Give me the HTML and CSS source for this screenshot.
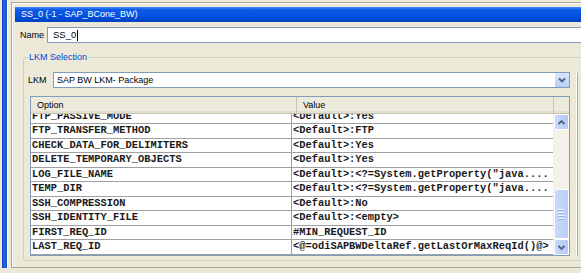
FILE: index.html
```html
<html>
<head>
	<link rel="stylesheet" href="styles.css">
</head>
<body>
	<div class="desk">
		<div class="edge"></div>
		<div class="pane">
			<div class="titlebar">SS_0 (-1 - SAP_BCone_BW)</div>
			<div class="namerow">
				<span class="lbl">Name</span>
				<div class="field">SS_0<span class="caret"></span></div>
			</div>
			<fieldset class="group">
				<legend>LKM Selection</legend>
				<div class="gwrap">
					<div class="gcol">
						<div class="lkmrow">
							<span class="lkmlbl">LKM</span>
							<div class="combo">
								<span class="ctext">SAP BW LKM- Package</span>
								<span class="drop">
									<svg width="14" height="14" viewBox="0 0 14 14"><polyline points="4,5.5 7,8.5 10,5.5" fill="none" stroke="#4d6185" stroke-width="1.8"/></svg>
								</span>
							</div>
						</div>
						<div class="grid">
							<div class="ghead">
								<div class="hopt">Option</div>
								<div class="hval">Value</div>
								<div class="hfill"></div>
							</div>
							<div class="gbody">
								<div class="rowsclip">
									<div class="rows">
										<div class="row"><div class="opt">FTP_PASSIVE_MODE</div><div class="val">&lt;Default&gt;:Yes</div></div>
										<div class="row"><div class="opt">FTP_TRANSFER_METHOD</div><div class="val">&lt;Default&gt;:FTP</div></div>
										<div class="row"><div class="opt">CHECK_DATA_FOR_DELIMITERS</div><div class="val">&lt;Default&gt;:Yes</div></div>
										<div class="row"><div class="opt">DELETE_TEMPORARY_OBJECTS</div><div class="val">&lt;Default&gt;:Yes</div></div>
										<div class="row"><div class="opt">LOG_FILE_NAME</div><div class="val">&lt;Default&gt;:&lt;?=System.getProperty("java....</div></div>
										<div class="row"><div class="opt">TEMP_DIR</div><div class="val">&lt;Default&gt;:&lt;?=System.getProperty("java....</div></div>
										<div class="row"><div class="opt">SSH_COMPRESSION</div><div class="val">&lt;Default&gt;:No</div></div>
										<div class="row"><div class="opt">SSH_IDENTITY_FILE</div><div class="val">&lt;Default&gt;:&lt;empty&gt;</div></div>
										<div class="row"><div class="opt">FIRST_REQ_ID</div><div class="val">#MIN_REQUEST_ID</div></div>
										<div class="row"><div class="opt">LAST_REQ_ID</div><div class="val">&lt;@=odiSAPBWDeltaRef.getLastOrMaxReqId()@&gt;</div></div>
									</div>
								</div>
								<div class="sbar">
									<div class="sbtn">
										<svg width="13" height="13" viewBox="0 0 13 13"><polyline points="3.5,8 6.5,5 9.5,8" fill="none" stroke="#4d6185" stroke-width="1.8"/></svg>
									</div>
									<div class="track"></div>
									<div class="thumb">
										<div class="grip"></div>
										<div class="grip"></div>
										<div class="grip"></div>
										<div class="grip"></div>
									</div>
									<div class="sbtn">
										<svg width="13" height="13" viewBox="0 0 13 13"><polyline points="3.5,5 6.5,8 9.5,5" fill="none" stroke="#4d6185" stroke-width="1.8"/></svg>
									</div>
								</div>
							</div>
						</div>
					</div>
					<div class="rail"></div>
				</div>
			</fieldset>
		</div>
	</div>
</body>
</html>
```

FILE: styles.css
```css
body{margin:0; background-color:#ECE9D8; width:581px; height:273px; overflow:hidden; font-family:"Liberation Sans", Arial, sans-serif; font-size:9px; color:#000;}
.desk{display:flex; height:268px;}
.edge{width:5px; margin-left:2px; background:linear-gradient(90deg,#0f3fc4,#2a62e0 50%,#1a4fd0); border-right:1px solid #fff;}
.pane{flex:1; margin-left:3px; margin-top:2px; border-top:1px solid #ACA899; border-left:1px solid #ACA899; border-bottom:1px solid #ACA899; box-shadow:inset 1px 1px 0 #fff; padding:4px 0 0 3px; display:flex; flex-direction:column; min-width:0;}
.titlebar{height:15px; line-height:15px; padding-left:6px; color:#fff; background:linear-gradient(#4a8ff5 0,#0c5ae6 18%,#0452e2 60%,#0140c2 100%);}
.namerow{display:flex; align-items:center; margin-top:5px;}
.lbl{width:32px; padding-left:5px; box-sizing:border-box;}
.field{flex:1; height:16px; box-sizing:border-box; border:1px solid #7F9DB9; background:#fff; margin-right:-4px; padding-left:5px; line-height:14px; font-size:9.5px; display:flex; align-items:center;}
.caret{display:inline-block; width:1px; height:11px; background:#000; margin-left:1px;}
.group{margin:9px -6px 0 8px; border:1px solid #D0D0BF; border-radius:3px; padding:9px 0 4px 4px; min-width:0;}
.group legend{color:#0046D5; padding:0 1px; line-height:11px; margin-left:0;}
.gwrap{display:flex;}
.gcol{width:542px;}
.rail{margin-left:7px; margin-top:1px; border-left:1px solid #ACA899; box-shadow:-1px 0 0 #fff;}
.lkmrow{display:flex; align-items:center;}
.lkmlbl{width:25px;}
.combo{flex:1; height:16px; box-sizing:border-box; border:1px solid #7F9DB9; background:#fff; display:flex; align-items:center; justify-content:space-between;}
.ctext{padding-left:3px;}
.drop{width:14px; height:14px; background:linear-gradient(#dbe6fd,#b9cdf8); border-left:1px solid #fff; display:flex;}
.grid{margin:8px 0 0 2px; border:1px solid #7F9DB9; background:#fff;}
.ghead{display:flex; height:16px; background:#EBEADB; border-bottom:1px solid #C5C2B2; box-shadow:inset 0 -2px 0 #E2DFCF;}
.hopt{width:259px; padding-left:6px; line-height:16px; border-right:1px solid #C7C5B2;}
.hval{flex:1; padding-left:6px; line-height:16px; border-right:1px solid #C7C5B2;}
.hfill{width:15px;}
.gbody{display:flex; height:141px;}
.rowsclip{flex:1; overflow:hidden;}
.rows{margin-top:-4.5px;}
.row{display:flex; height:14.5px; box-sizing:border-box; border-bottom:1px solid #A0A0A0; font-family:"Liberation Mono", "Courier New", monospace; font-size:10.4px; font-weight:bold; line-height:13.5px; color:#1a1a1a;}
.opt{width:261px; padding-left:1px; border-right:1px solid #A0A0A0; box-sizing:border-box; white-space:nowrap; overflow:hidden;}
.val{flex:1; padding-left:1px; white-space:nowrap; overflow:hidden;}
.sbar{width:15px; display:flex; flex-direction:column; background:#F3F1EA; border-left:1px solid #EEEDE5;}
.sbtn{height:14px; display:flex; align-items:center; justify-content:center; background:linear-gradient(90deg,#c8d8fb,#b4c9f6); border:1px solid #fff; border-radius:2px;}
.track{flex:1;}
.thumb{height:48px; background:linear-gradient(90deg,#cbdafc,#b8cdf9); border:1px solid #fff; border-radius:2px; display:flex; flex-direction:column; align-items:center; justify-content:center; gap:1px;}
.grip{width:7px; height:1px; background:#eef3fe; border-bottom:1px solid #9db5ec;}
```
